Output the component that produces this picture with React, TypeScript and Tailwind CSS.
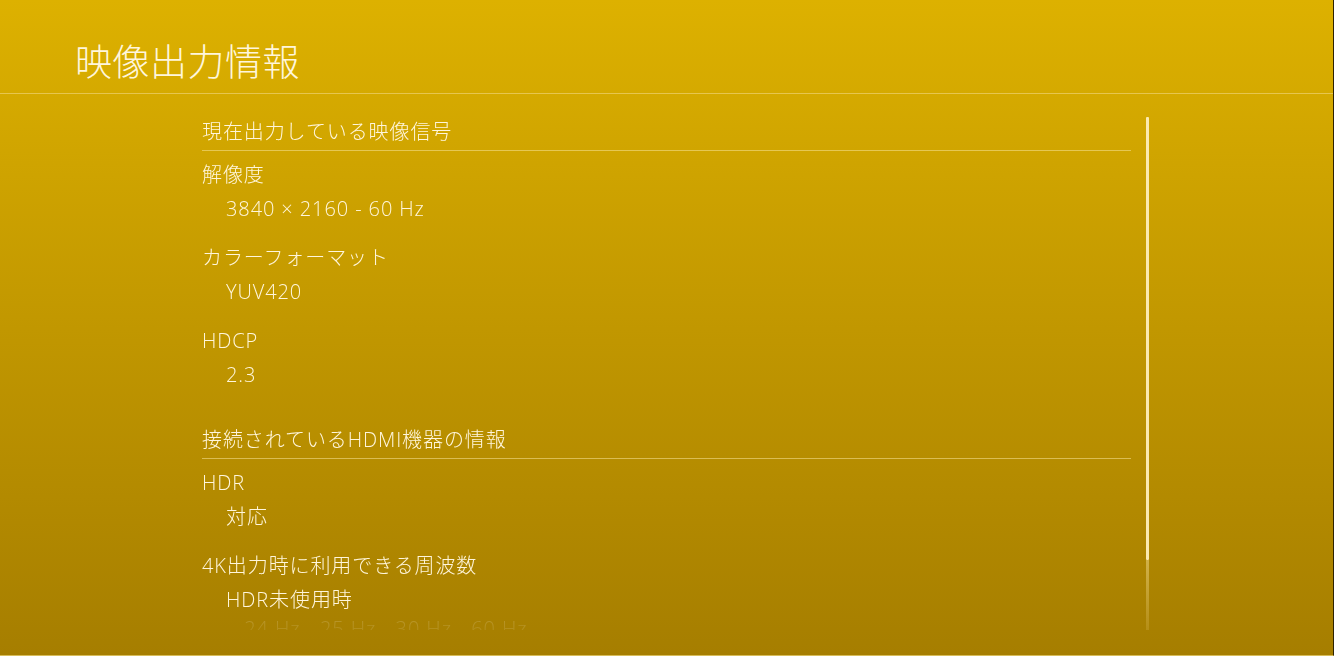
const font = { fontFamily: '"Open Sans", "Noto Sans CJK JP", sans-serif' };

type Item = { label: string; values: string[] };

const sections: { title: string; items: Item[] }[] = [
  {
    title: "現在出力している映像信号",
    items: [
      { label: "解像度", values: ["3840 × 2160 - 60 Hz"] },
      { label: "カラーフォーマット", values: ["YUV420"] },
      { label: "HDCP", values: ["2.3"] },
    ],
  },
  {
    title: "接続されているHDMI機器の情報",
    items: [
      { label: "HDR", values: ["対応"] },
      { label: "4K出力時に利用できる周波数", values: ["HDR未使用時", "   24 Hz - 25 Hz - 30 Hz - 60 Hz"] },
    ],
  },
];

export default function App() {
  return (
    <div
      className="flex h-[656px] w-[1334px] flex-col overflow-hidden border-r border-b border-r-[#2e2300] border-b-[#d8bd5a] bg-gradient-to-b from-[#ddb100] to-[#a67e00] text-[#fff6dc]"
      style={font}
    >
      <header className="flex h-[94px] shrink-0 items-start border-b border-[#ecd170]/70 pl-[75px] pt-[38px]">
        <h1 className="text-[37px] font-light leading-[48px] tracking-[0.5px]">映像出力情報</h1>
      </header>

      <div className="flex min-h-0 flex-1">
        <div className="h-[536px] w-[1131px] shrink-0 overflow-hidden pl-[202px] tracking-[0.9px] [mask-image:linear-gradient(to_bottom,black_0%,black_96%,rgba(0,0,0,0.2)_97.5%,rgba(0,0,0,0.12)_100%)]">
          {sections.map((s, i) => (
            <section key={s.title} className={i === 0 ? "pt-[23px]" : "pt-[18px]"}>
              <div className="border-b border-[#f3dd8a]/60 pb-[3px] text-[20px] font-light leading-[30px]">
                {s.title}
              </div>
              <div className="pt-[7px]">
                {s.items.map((it) => (
                  <div key={it.label} className="pb-[15px] text-[20px] font-light leading-[34px]">
                    <div>{it.label}</div>
                    {it.values.map((v, j) => (
                      <div key={v} className={j > 0 ? "-mt-[5px] pl-[24px] whitespace-pre" : "pl-[24px] whitespace-pre"}>
                        {v}
                      </div>
                    ))}
                  </div>
                ))}
              </div>
            </section>
          ))}
        </div>

        <div className="ml-[15px] flex w-[3px] flex-col pt-[23px]">
          <div className="h-[443px] w-[3px] rounded-[1px] bg-[#fbeab0]" />
          <div className="h-[70px] w-[3px] bg-gradient-to-b from-[#e0c468]/70 to-[#c9a436]/40" />
        </div>
      </div>
    </div>
  );
}
